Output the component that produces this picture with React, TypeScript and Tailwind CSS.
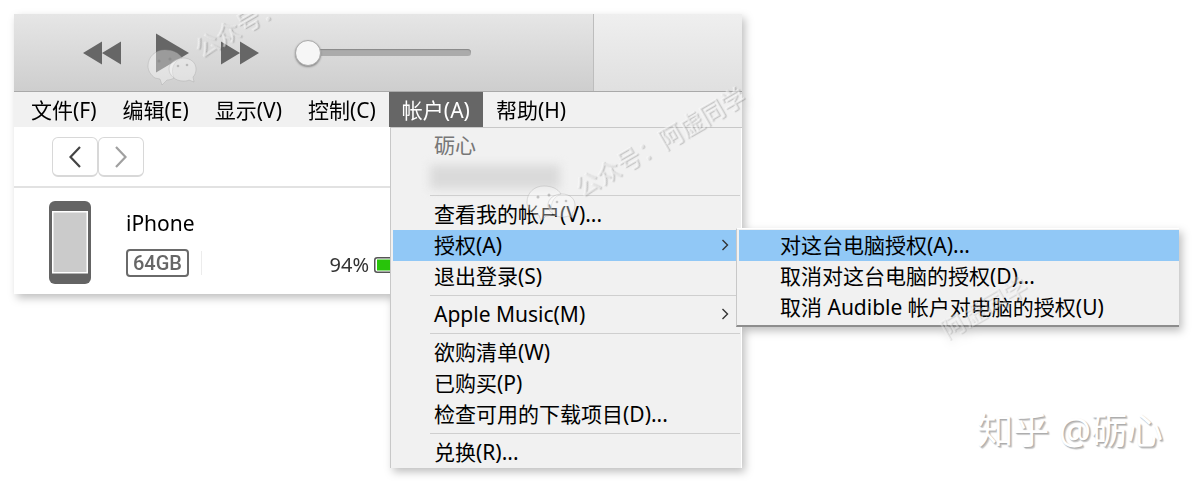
import React from "react";

const ROW = "flex h-[31px] w-full items-center whitespace-nowrap pb-px text-left text-[21px] leading-[30px]";

function Chevron() {
  return (
    <svg className="ml-auto mr-[7px] h-3 w-2" viewBox="0 0 8 12" fill="none" stroke="#333" strokeWidth="1.4" aria-hidden="true">
      <path d="M1.5 1 6.5 6l-5 5" />
    </svg>
  );
}

function MenuItem({ label, active = false, sub = false, flush = false, children }: { label: string; active?: boolean; sub?: boolean; flush?: boolean; children?: React.ReactNode }) {
  return (
    <li role="none" className={`relative ml-0.5 ${flush ? "" : "mr-1.5"}`}>
      <button role="menuitem" aria-haspopup={sub} className={`${ROW} pl-[41px] ${active ? "bg-[#91c8f6]" : ""}`}>
        {label}
        {sub && <Chevron />}
      </button>
      {children}
    </li>
  );
}

function Separator() {
  return <li role="separator" className="ml-[39px] mr-0.5 mt-[3px] mb-[3px] h-px bg-[#cfcfcf]" />;
}

function Bubbles({ className }: { className: string }) {
  return (
    <svg className={className} viewBox="0 0 50 38" aria-hidden="true">
      <g fill="#fff" fillOpacity=".35" stroke="#999" strokeOpacity=".3" strokeWidth="1">
        <path d="M18 1C8 1 1 8 1 17c0 5 3 9 7 12l5 1 2 6 5-5c3 0 5-1 7-2-4-9 0-17 8-20C32 4 26 1 18 1Z" />
        <path d="M36 9c-8 0-14 5-14 11s6 12 14 12c2 0 4 0 6-1l5 2-1-5c2-2 3-5 3-8 0-6-5-11-13-11Z" />
      </g>
      <g fill="#777" fillOpacity=".4">
        <circle cx="12" cy="12" r="1.5" />
        <circle cx="23" cy="10" r="1.5" />
        <circle cx="31" cy="17" r="1.3" />
        <circle cx="40" cy="16" r="1.3" />
      </g>
    </svg>
  );
}

const MARK =
  "block -rotate-[30deg] whitespace-nowrap text-[24px] leading-[30px] font-medium text-white/55 [text-shadow:1px_1px_1px_rgba(0,0,0,0.2)]";

function Transport() {
  return (
    <div className="flex h-[78px] border-b border-[#a9a9a9]">
      <div className="flex flex-1 items-center gap-8 border-r border-[#bdbdbd] bg-linear-to-b from-[#e6e6e6] to-[#cecece] pl-[69px]">
        <button aria-label="Previous">
          <svg className="h-6 w-[38px]" viewBox="0 0 38 24" fill="#666"><path d="M0 12 19 .5v23ZM19 12 38 .5v23Z" /></svg>
        </button>
        <button aria-label="Play">
          <svg className="h-10 w-9" viewBox="0 0 36 40" fill="#666"><path d="M3 .5 36 20 3 39.5Z" /></svg>
        </button>
        <button aria-label="Next">
          <svg className="h-6 w-[38px]" viewBox="0 0 38 24" fill="#666"><path d="M0 .5 19 12 0 23.5ZM19 .5 38 12 19 23.5Z" /></svg>
        </button>
        <input
          type="range"
          aria-label="Volume"
          defaultValue={0}
          className="ml-1 h-7 w-44 appearance-none bg-transparent [&::-webkit-slider-runnable-track]:h-[7px] [&::-webkit-slider-runnable-track]:rounded-full [&::-webkit-slider-runnable-track]:bg-[#ababab] [&::-webkit-slider-runnable-track]:shadow-[inset_0_1px_1px_#888] [&::-webkit-slider-thumb]:-mt-[9px] [&::-webkit-slider-thumb]:size-[26px] [&::-webkit-slider-thumb]:appearance-none [&::-webkit-slider-thumb]:rounded-full [&::-webkit-slider-thumb]:border [&::-webkit-slider-thumb]:border-[#aaa] [&::-webkit-slider-thumb]:bg-[#f6f6f6] [&::-webkit-slider-thumb]:shadow-[0_1px_2px_#888]"
        />
      </div>
      <div className="w-[148px] bg-linear-to-b from-[#efefef] to-[#e0e0e0]" />
    </div>
  );
}

function Device() {
  return (
    <div className="flex h-[106px] overflow-hidden pt-[13px] pl-[35px]">
      <svg className="h-[83px] w-[42px] shrink-0" viewBox="0 0 42 83" aria-hidden="true">
        <rect width="42" height="83" rx="6" fill="#646464" />
        <rect x="3.75" y="10.75" width="34.5" height="61" fill="#cbcbcb" stroke="#fff" strokeWidth="1.5" />
      </svg>
      <div className="ml-[35px] flex-1">
        <h1 className="mt-2 text-[21px] leading-7">iPhone</h1>
        <div className="mt-3 flex items-center">
          <span className="rounded border-2 border-[#6a6a6a] px-[5px] font-[Roboto] text-[20px] leading-6 font-medium text-[#666]">64GB</span>
          <span className="ml-3 h-6 w-px bg-[#ececec]" />
          <div className="ml-auto flex items-center pt-1">
            <span className="text-[20px] leading-6 text-[#333]">94%</span>
            <svg className="ml-[5px] h-4 w-4 shrink-0" viewBox="0 0 16 16" aria-hidden="true">
              <rect x=".75" y=".75" width="30" height="14.5" rx="2.5" fill="#fff" stroke="#555" strokeWidth="1.5" />
              <rect x="3" y="2.5" width="26" height="11" fill="#28c40a" />
            </svg>
          </div>
        </div>
      </div>
    </div>
  );
}

function AccountMenu() {
  return (
    <ul role="menu" aria-label="帐户" className="relative w-[352px] shrink-0 border-t border-l border-[#c8c8c8] bg-[#f1f1f1] pt-0.5 shadow-[inset_-1px_0_0_#fff]">
      <li className={`${ROW} pl-[43px] text-[#777]`}>砺心</li>
      <li className="flex h-[31px] items-center pl-[39px]">
        <span className="h-6 w-[130px] bg-[#dadada] blur-[5px]" />
      </li>
      <Separator />
      <MenuItem label="查看我的帐户(V)..." />
      <MenuItem label="授权(A)" active sub>
        <ul role="menu" aria-label="授权" className="absolute -top-0.5 left-full z-10 w-[443px] border-t border-l border-b-2 border-t-white border-l-[#c8c8c8] border-b-[#8d8d8d] bg-[#f1f1f1] pt-px pb-0.5">
          <MenuItem label="对这台电脑授权(A)..." active flush />
          <MenuItem label="取消对这台电脑的授权(D)..." flush />
          <MenuItem label="取消 Audible 帐户对电脑的授权(U)" flush />
          <li aria-hidden="true" className="pointer-events-none absolute top-16 left-[199px] opacity-60">
            <span className={MARK}>阿虚同学</span>
          </li>
        </ul>
      </MenuItem>
      <MenuItem label="退出登录(S)" />
      <Separator />
      <MenuItem label="Apple Music(M)" sub />
      <Separator />
      <MenuItem label="欲购清单(W)" />
      <MenuItem label="已购买(P)" />
      <MenuItem label="检查可用的下载项目(D)..." />
      <Separator />
      <MenuItem label="兑换(R)..." />
    </ul>
  );
}

export default function App() {
  const menus = ["文件(F)", "编辑(E)", "显示(V)", "控制(C)", "帐户(A)", "帮助(H)"];
  return (
    <main className="relative min-h-screen bg-white p-3.5 font-['Noto_Sans','Noto_Sans_CJK_SC',sans-serif] text-black">
      <div className="relative w-full max-w-[728px] drop-shadow-[3px_4px_4px_rgba(0,0,0,0.25)]">
        <Transport />
        <nav aria-label="Menu bar" className="flex h-[35px] bg-[#f1f1f1] pl-1">
          {menus.map((m) => (
            <button key={m} className={`px-[13px] text-[21px] leading-9 whitespace-nowrap ${m === "帐户(A)" ? "bg-[#666] text-white" : ""}`}>
              {m}
            </button>
          ))}
        </nav>
        <div className="flex items-start">
          <section className="min-w-0 flex-1 bg-white">
            <div className="flex h-[61px] border-b-2 border-[#e2e2e2] pt-2.5 pl-[38px]">
              <button aria-label="Back" className="grid h-10 w-[46px] place-items-center rounded-md border border-b-2 border-[#d8d8d8]">
                <svg className="h-[22px] w-3" viewBox="0 0 12 22" fill="none" stroke="#444" strokeWidth="2.2"><path d="M11 1 1.5 11 11 21" /></svg>
              </button>
              <button aria-label="Forward" className="grid h-10 w-[46px] place-items-center rounded-md border border-b-2 border-[#d8d8d8]">
                <svg className="h-[22px] w-3" viewBox="0 0 12 22" fill="none" stroke="#a0a0a0" strokeWidth="2.2"><path d="M1 1 10.5 11 1 21" /></svg>
              </button>
            </div>
            <Device />
          </section>
          <AccountMenu />
        </div>
        <div aria-hidden="true" className="pointer-events-none absolute inset-0 overflow-hidden">
          <Bubbles className="absolute top-[35px] left-[133px] h-[38px] w-[50px]" />
          <span className="absolute -top-0.5 left-[176px]"><span className={MARK}>公众号：</span></span>
        </div>
        <div aria-hidden="true" className="pointer-events-none absolute top-[113px] left-[512px]">
          <Bubbles className="absolute top-[58px] left-0 h-[38px] w-[50px]" />
          <span className={`${MARK} ml-[38px]`}>公众号：阿虚同学</span>
        </div>
      </div>
      <p className="absolute right-[30px] bottom-[26px] text-[36px] leading-[50px] text-white [text-shadow:1px_1px_1px_#aaa,2px_2px_1px_#ccc]">知乎 @砺心</p>
    </main>
  );
}
